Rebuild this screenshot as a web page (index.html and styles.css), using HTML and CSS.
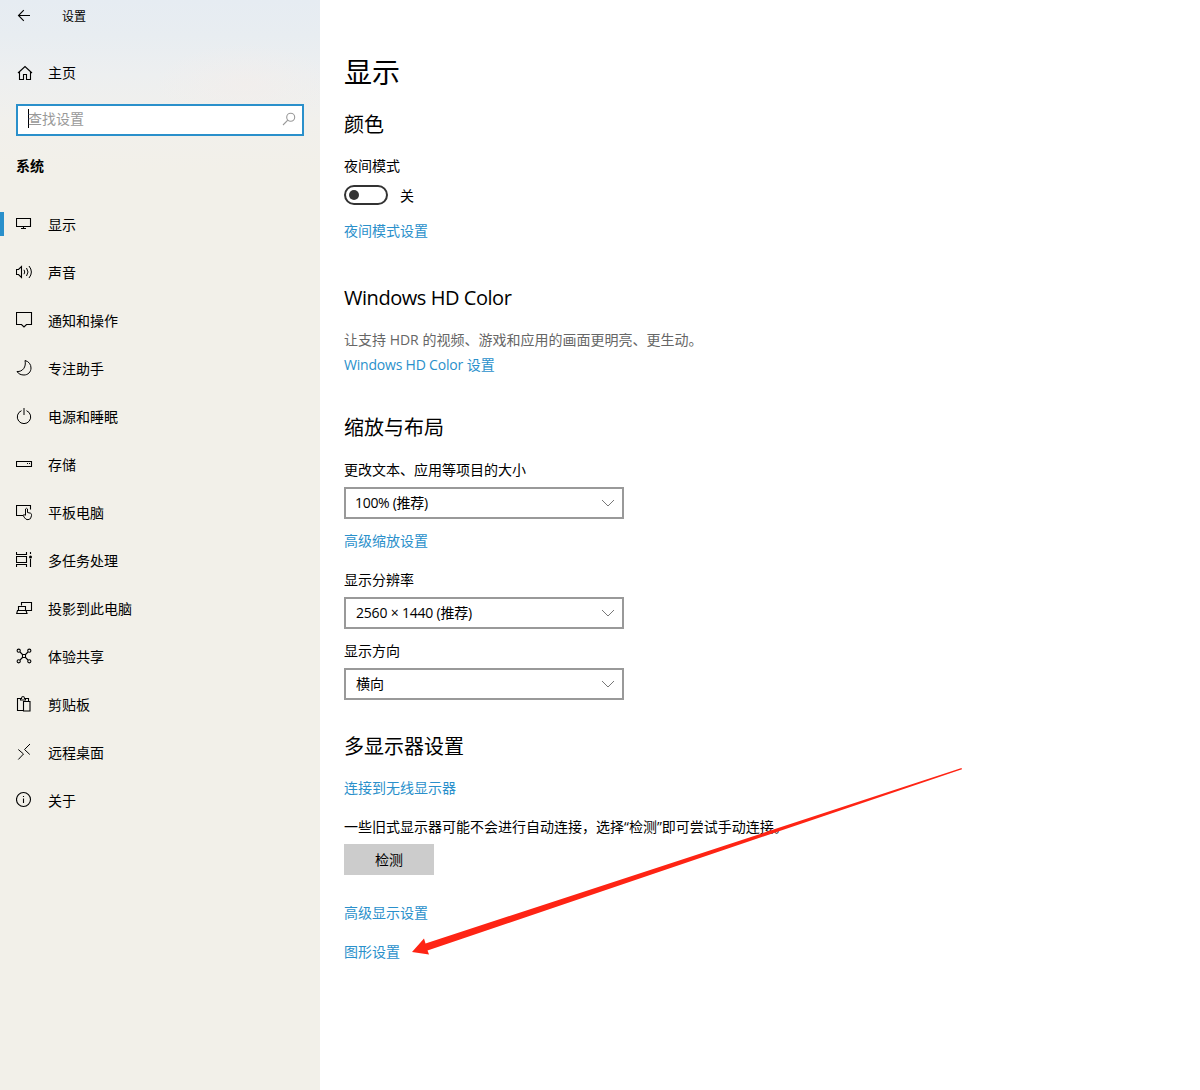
FILE: index.html
```html
<!DOCTYPE html>
<html lang="zh-CN">
<head>
<meta charset="utf-8">
<title>设置</title>
<link rel="stylesheet" href="styles.css">
</head>
<body>
<div class="window">
  <aside class="sidebar">
    <header class="titlebar">
      <svg class="icon" viewBox="0 0 18 18"><path d="M14 8.5H2.5M7.8 3.2L2.5 8.5l5.3 5.3"/></svg>
      <span>设置</span>
    </header>
    <a class="home">
      <svg class="icon" viewBox="0 0 18 18"><path d="M2 9l7-6.5L16 9M3.5 8v7.5h4v-5h3v5h4V8"/></svg>
      <span>主页</span>
    </a>
    <div class="search">
      <span class="caret"></span>
      <span class="placeholder">查找设置</span>
      <svg class="icon" viewBox="0 0 18 18"><circle cx="10.7" cy="6.3" r="4"/><path d="M7.8 9.2L3 14"/></svg>
    </div>
    <h2 class="category">系统</h2>
    <nav class="nav">
      <a class="item active"><svg class="icon" viewBox="0 0 18 18"><path d="M.5 3.5h14v8H.5zM7.5 11.5v2M5 13.5h5"/></svg><span>显示</span></a>
      <a class="item"><svg class="icon" viewBox="0 0 18 18"><path d="M.5 6.5h2l3-3v11l-3-3h-2z"/><path class="thin" d="M8 6.8q1.5 2.2 0 4.4M10.500 5q3 4 0 8M13 3q4.800 6 0 12"/></svg><span>声音</span></a>
      <a class="item"><svg class="icon" viewBox="0 0 18 18"><path d="M.5 1.500h15v12h-5L8 16l-2.500-2.500h-5z"/></svg><span>通知和操作</span></a>
      <a class="item"><svg class="icon" viewBox="0 0 18 18"><path class="thin" d="M9 1.500C13 2.500 15 5.500 15 9c0 4-3 7-7 7-3 0-5.500-1-7-3.500C6.500 13 10.500 8 9 1.500z"/></svg><span>专注助手</span></a>
      <a class="item"><svg class="icon" viewBox="0 0 18 18"><path class="thin" d="M5.500 3.700a6.700 6.700 0 1 0 5 0M8 1v7"/></svg><span>电源和睡眠</span></a>
      <a class="item"><svg class="icon" viewBox="0 0 18 18"><path d="M.5 6.500h15v5H.5zM11 8.500h1M13 8.500h1"/></svg><span>存储</span></a>
      <a class="item"><svg class="icon" viewBox="0 0 18 18"><path d="M7 12.500H.5v-10h14v4"/><path class="thin" d="M9.500 12V6q1-1.500 2 0v3.500l3 .7q1 .3 1 1.500v1q-.3 4-3.500 4-2.300 0-3.300-1.800L7 12.300q1-1.300 2.500.2"/></svg><span>平板电脑</span></a>
      <a class="item"><svg class="icon" viewBox="0 0 18 18"><path d="M.5 1v2.500h10V1M.5 5.500h10v6H.5zM.5 16v-2.500h10V16M14.500 1v2M14.500 8v8"/><circle class="dot" cx="14.500" cy="6" r="1.500"/></svg><span>多任务处理</span></a>
      <a class="item"><svg class="icon" viewBox="0 0 18 18"><path d="M5.500 6.500v-3h10v8h-5M2.500 11.500v-4h7v4M1.500 11.500h8.500l1 3H.7z"/></svg><span>投影到此电脑</span></a>
      <a class="item"><svg class="icon" viewBox="0 0 18 18"><circle cx="2.700" cy="3.700" r="1.600"/><circle cx="13.300" cy="3.700" r="1.600"/><circle cx="2.700" cy="14.300" r="1.600"/><circle cx="13.300" cy="14.300" r="1.600"/><path d="M4 5l2.500 2.500M12 5L9.500 7.500M4 13l2.500-2.500M12 13l-2.500-2.500M6.500 7.500h3v3h-3z"/></svg><span>体验共享</span></a>
      <a class="item"><svg class="icon" viewBox="0 0 18 18"><path d="M7.500 15.500h-6v-12h3M9.500 3.500h3v3M4.500 5V3.500h1q0-2 1.500-2t1.500 2h1V5zM7.500 6.500h6.500v9.500H7.500z"/></svg><span>剪贴板</span></a>
      <a class="item"><svg class="icon" viewBox="0 0 18 18"><path class="thin" d="M14 1L8.500 6.500l5.300 5M2.300 6.500L7.500 11 2.300 16.500"/></svg><span>远程桌面</span></a>
      <a class="item"><svg class="icon" viewBox="0 0 18 18"><circle cx="7.500" cy="8.500" r="7"/><path d="M7.500 7.500V12M7.500 5v1"/></svg><span>关于</span></a>
    </nav>
  </aside>

  <main class="content">
    <h1>显示</h1>

    <section class="color">
      <h2>颜色</h2>
      <p>夜间模式</p>
      <div class="toggle-row"><span class="toggle"></span><span class="state">关</span></div>
      <a class="link">夜间模式设置</a>
    </section>

    <section class="hd">
      <h2 class="latin">Windows HD Color</h2>
      <p class="muted">让支持 HDR 的视频、游戏和应用的画面更明亮、更生动。</p>
      <a class="link"><span class="tight">Windows HD Color</span> 设置</a>
    </section>

    <section class="scale">
      <h2>缩放与布局</h2>
      <p>更改文本、应用等项目的大小</p>
      <div class="select"><span class="percent">100% (推荐)</span><svg class="chevron" viewBox="0 0 14 8"><path d="M1 1l6 6 6-6"/></svg></div>
      <a class="link">高级缩放设置</a>
      <p class="resolution">显示分辨率</p>
      <div class="select"><span class="tight">2560 × 1440 (推荐)</span><svg class="chevron" viewBox="0 0 14 8"><path d="M1 1l6 6 6-6"/></svg></div>
      <p class="orientation">显示方向</p>
      <div class="select"><span>横向</span><svg class="chevron" viewBox="0 0 14 8"><path d="M1 1l6 6 6-6"/></svg></div>
    </section>

    <section class="multi">
      <h2>多显示器设置</h2>
      <a class="link">连接到无线显示器</a>
      <p>一些旧式显示器可能不会进行自动连接，选择“检测”即可尝试手动连接。</p>
      <button class="detect" type="button">检测</button>
      <a class="link advanced">高级显示设置</a>
      <a class="link graphics">图形设置</a>
    </section>
  </main>

  <svg class="pointer" viewBox="0 0 552 190"><path d="M0 184L12 170.500 13.500 175.500 549.500 0 550 1.200 15.500 182.500 17 186.500z"/></svg>
</div>
</body>
</html>
```
FILE: styles.css
```css
* {
  box-sizing: border-box;
}

body {
  margin: 0;
  color: #000;
  background: #fff;
  font: 14px/20px "Open Sans", "Noto Sans CJK SC", sans-serif;
}

h1, h2, p {
  margin: 0;
  font-weight: 400;
}

.window {
  position: relative;
  display: flex;
  height: 1090px;
  overflow: hidden;
}

/* Sidebar */
.sidebar {
  width: 320px;
  background:
    radial-gradient(ellipse 90px 40px at 245px 84px, rgba(245, 237, 233, 0.45), transparent),
    linear-gradient(#e6ecf2 0, #e8edf1 35px, #edeff0 75px, #f1f0ec 120px, #f2f0e9 170px, #f2f0e9);
}

.icon {
  flex: none;
  width: 18px;
  height: 18px;
  fill: none;
  stroke: #000;
  stroke-width: 1.1;
}

.icon .thin {
  stroke-width: 1;
}

.icon .dot {
  fill: #000;
  stroke: none;
}

.titlebar {
  display: flex;
  align-items: center;
  gap: 28px;
  height: 32px;
  padding-left: 16px;
  font-size: 12px;
}

.titlebar span {
  padding-top: 2px;
}

.home {
  display: flex;
  align-items: center;
  gap: 14px;
  height: 48px;
  margin-top: 17px;
  padding-left: 16px;
}

.search {
  display: flex;
  align-items: center;
  height: 32px;
  margin: 7px 16px 0;
  padding: 0 4px 0 10px;
  background: #fff;
  border: 2px solid #2a90cb;
}

.caret {
  width: 1px;
  height: 19px;
  margin-bottom: 3px;
  background: #000;
}

.placeholder {
  flex: 1;
  color: #999;
  margin-left: -1px;
  padding-bottom: 2px;
}

.search .icon {
  stroke: #999;
}

.category {
  margin: 20px 0 0 16px;
  font-size: 14px;
  font-weight: 700;
  line-height: 20px;
}

.nav {
  margin-top: 24px;
}

.item {
  display: flex;
  align-items: center;
  gap: 14px;
  height: 48px;
  padding-left: 16px;
}

.item span {
  padding-top: 1px;
}

.item.active {
  padding-left: 0;
}

.item.active::before {
  content: "";
  width: 4px;
  height: 24px;
  margin-right: -2px;
  background: #2a90cb;
}

/* Content */
.content {
  flex: 1;
  display: flex;
  flex-direction: column;
  padding: 52px 0 0 24px;
}

h1 {
  font-size: 28px;
  line-height: 40px;
}

.content section {
  display: flex;
  flex-direction: column;
  align-items: flex-start;
}

.content h2 {
  margin-bottom: 17px;
  font-size: 20px;
  line-height: 28px;
}

.content .latin {
  margin-bottom: 18px;
  letter-spacing: -0.45px;
}

.tight {
  letter-spacing: -0.2px;
}

.percent {
  margin-left: -1px;
  letter-spacing: -0.3px;
}

.link {
  color: #2a90cb;
}

.muted {
  color: #666;
}

.color {
  margin-top: 19px;
}

.toggle-row {
  display: flex;
  align-items: center;
  gap: 12px;
  height: 20px;
  margin: 9px 0 16px;
}

.toggle {
  display: flex;
  align-items: center;
  width: 44px;
  height: 20px;
  padding-left: 3px;
  border: 2px solid #333;
  border-radius: 10px;
}

.toggle::before {
  content: "";
  width: 10px;
  height: 10px;
  border-radius: 50%;
  background: #333;
}

.state {
  padding-top: 2px;
}

.hd {
  margin-top: 43px;
}

.hd p {
  margin-bottom: 5px;
}

.scale {
  margin-top: 39px;
}

.content .scale h2 {
  margin-bottom: 18px;
}

.select {
  display: flex;
  align-items: center;
  justify-content: space-between;
  width: 280px;
  height: 32px;
  margin-top: 7px;
  padding: 0 7px 0 10px;
  border: 2px solid #999;
}

.chevron {
  width: 14px;
  height: 8px;
  fill: none;
  stroke: #777;
}

.scale .link {
  margin-top: 12px;
}

.resolution {
  margin-top: 19px;
}

.orientation {
  margin-top: 12px;
}

.multi {
  margin-top: 33px;
}

.multi p {
  margin-top: 19px;
}

.detect {
  width: 90px;
  height: 31px;
  margin-top: 7px;
  padding: 0;
  border: 0;
  color: #000;
  background: #ccc;
  font: inherit;
}

.advanced {
  margin-top: 28px;
}

.graphics {
  margin-top: 19px;
}

/* Annotation arrow lying over the page */
.pointer {
  position: absolute;
  left: 412px;
  top: 768px;
  width: 552px;
  height: 190px;
  fill: #fe2414;
}
```
